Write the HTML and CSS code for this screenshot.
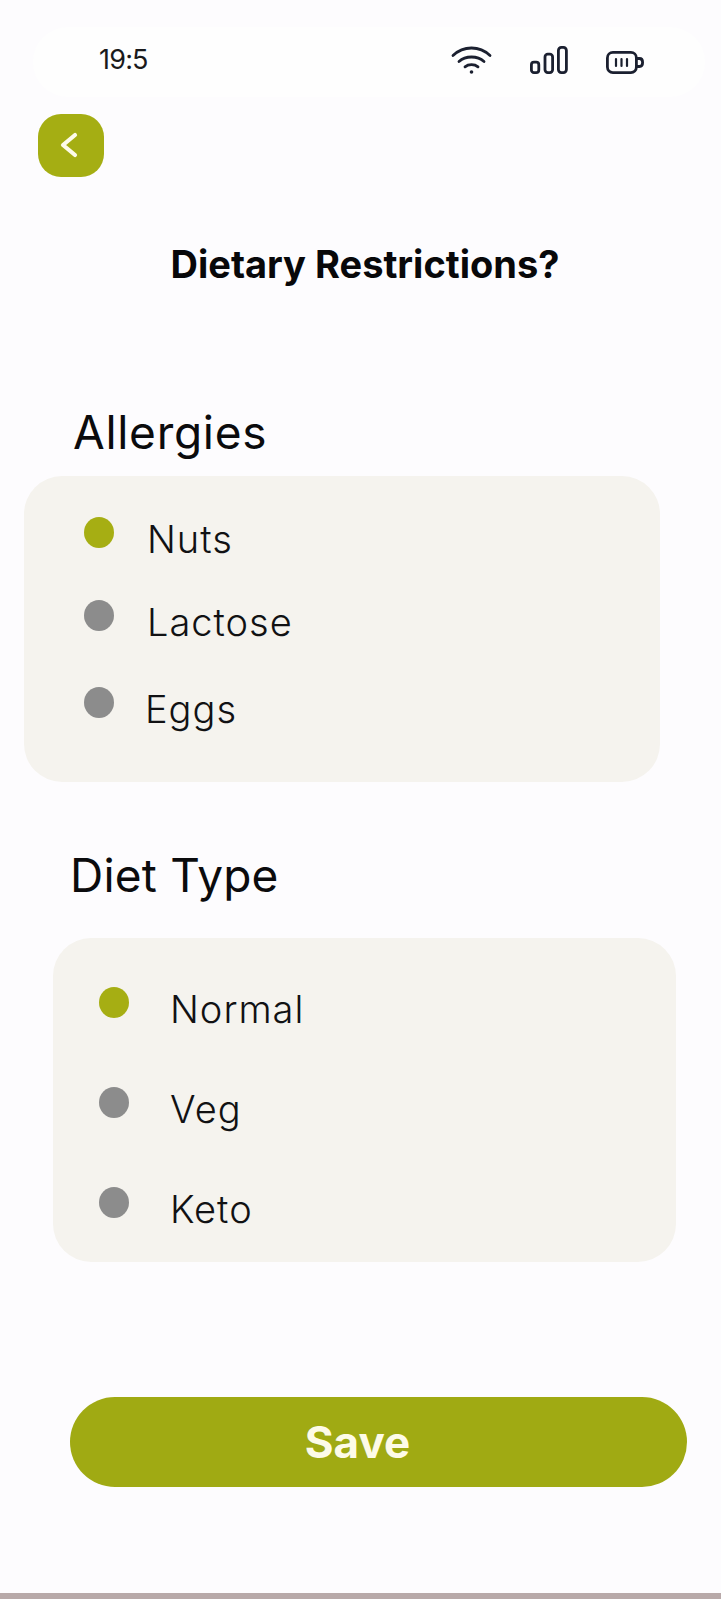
FILE: index.html
```html
<!DOCTYPE html>
<html lang="en">
<head>
<meta charset="utf-8">
<title>Dietary Restrictions</title>
<link rel="stylesheet" href="styles.css">
</head>
<body>
<main class="screen">
  <header class="status">
    <span class="time">19:5</span>
    <div class="status-icons">
      <svg class="wifi" width="41" height="29" viewBox="0 0 41 29" fill="none" stroke="#1b2030" stroke-width="2.8" stroke-linecap="round">
        <path d="M2 10.5C12.5 0.5 28.5 0.5 39 10.5"/>
        <path d="M8 16.5C14.5 10.5 26.5 10.5 33 16.5"/>
        <path d="M14 21.8C17.5 19 23.5 19 27 21.8"/>
        <circle cx="20.5" cy="27" r="1.8" fill="#1b2030" stroke="none"/>
      </svg>
      <svg class="signal" width="38" height="28" viewBox="0 0 38 28" fill="none" stroke="#1b2030" stroke-width="2.8">
        <rect x="1.4" y="16.2" width="7.4" height="10.4" rx="2.6"/>
        <rect x="15" y="8.2" width="7.6" height="18.4" rx="2.8"/>
        <rect x="28.4" y="1.4" width="8" height="25.2" rx="3"/>
      </svg>
      <svg class="battery" width="38" height="23" viewBox="0 0 38 23" fill="none" stroke="#1b2030" stroke-width="2.8" stroke-linecap="round">
        <rect x="1.4" y="1.4" width="29" height="20.2" rx="5.5"/>
        <path d="M31 7.5H33.5C35.5 7.5 36.6 9.2 36.6 11.5C36.6 13.8 35.5 15.5 33.5 15.5H31"/>
        <path d="M10 8V15M15.5 8V15M21 8V15" stroke-width="2.2"/>
      </svg>
    </div>
  </header>

  <button class="back" type="button" aria-label="Back">
    <svg width="22" height="26" viewBox="0 0 22 26" fill="none" stroke="#fdfbe8" stroke-width="4.2" stroke-linecap="round" stroke-linejoin="round">
      <path d="M17 3L5 13L17 23"/>
    </svg>
  </button>

  <h1 class="title">Dietary Restrictions?</h1>

  <section class="group group-allergies">
    <h2 class="group-title">Allergies</h2>
    <ul class="card">
      <li class="option"><span class="dot on"></span><span class="label">Nuts</span></li>
      <li class="option"><span class="dot"></span><span class="label">Lactose</span></li>
      <li class="option option-eggs"><span class="dot"></span><span class="label">Eggs</span></li>
    </ul>
  </section>

  <section class="group group-diet">
    <h2 class="group-title">Diet Type</h2>
    <ul class="card">
      <li class="option"><span class="dot on"></span><span class="label">Normal</span></li>
      <li class="option"><span class="dot"></span><span class="label">Veg</span></li>
      <li class="option"><span class="dot"></span><span class="label">Keto</span></li>
    </ul>
  </section>

  <button class="save" type="button">Save</button>
  <div class="bottom-band"></div>
</main>
</body>
</html>
```
FILE: styles.css
```css
* { box-sizing: border-box; }
html, body { margin: 0; padding: 0; }
body {
  background: #fdfcfe;
  font-family: Inter, "Liberation Sans", sans-serif;
  color: #0b0b0d;
}
.screen {
  width: 721px;
  height: 1599px;
  display: flex;
  flex-direction: column;
  overflow: hidden;
}
.status {
  height: 70px;
  margin: 27px 16px 0 33px;
  padding: 0 61px 8px 66px;
  display: flex;
  align-items: center;
  justify-content: space-between;
  background: #fefefe;
  border-radius: 35px;
}
.time {
  padding-top: 2px;
  font-size: 27px;
  font-weight: 400;
  letter-spacing: -0.8px;
  color: #1a1a1c;
}
.status-icons {
  display: flex;
  align-items: flex-end;
  gap: 38px;
  padding-top: 3px;
}
.back {
  width: 66px;
  height: 63px;
  margin: 17px 0 0 38px;
  padding: 0 4px 2px 0;
  border: 0;
  border-radius: 23px;
  background: #a5ae13;
  display: flex;
  align-items: center;
  justify-content: center;
}
.title {
  margin: 65px 0 0;
  padding-left: 9px;
  font-size: 38px;
  line-height: 44px;
  font-weight: 700;
  text-align: center;
  color: #08080a;
}
.group-title {
  margin: 0;
  font-size: 46px;
  line-height: 52px;
  font-weight: 400;
}
.group-allergies { margin-top: 120px; }
.group-allergies .group-title { padding-left: 73px; letter-spacing: 0.7px; }
.group-allergies .card {
  margin: 18px 61px 0 24px;
  height: 306px;
  padding: 41px 0 0 60px;
  gap: 43px;
}
.group-diet { margin-top: 67px; }
.group-diet .group-title { padding-left: 70px; letter-spacing: 0.2px; }
.group-diet .card {
  margin: 37px 45px 0 53px;
  height: 324px;
  padding: 49px 0 0 46px;
  gap: 60px;
}
.card {
  list-style: none;
  display: flex;
  flex-direction: column;
  background: #f5f3ee;
  border-radius: 38px;
}
.option {
  height: 40px;
  display: flex;
  align-items: flex-start;
}
.option-eggs { margin-top: 4px; }
.dot {
  width: 30px;
  height: 31px;
  flex: none;
  border-radius: 50%;
  background: #8c8c8c;
}
.dot.on { background: #a6ae13; }
.label {
  margin: 0 0 0 33px;
  font-size: 38px;
  line-height: 44px;
  font-weight: 300;
  letter-spacing: 1px;
  color: #111113;
}
.group-diet .label { margin-left: 41px; }
.option-eggs .label { margin-left: 31px; }
.save {
  width: 617px;
  height: 90px;
  margin: 135px 0 0 70px;
  padding: 0 42px 0 0;
  flex: none;
  border: 0;
  border-radius: 45px;
  background: #a0aa13;
  color: #fdfbe8;
  font-family: Inter, "Liberation Sans", sans-serif;
  font-size: 44px;
  font-weight: 700;
}
.bottom-band {
  height: 6px;
  margin-top: auto;
  flex: none;
  background: #b8a9a9;
}
```
